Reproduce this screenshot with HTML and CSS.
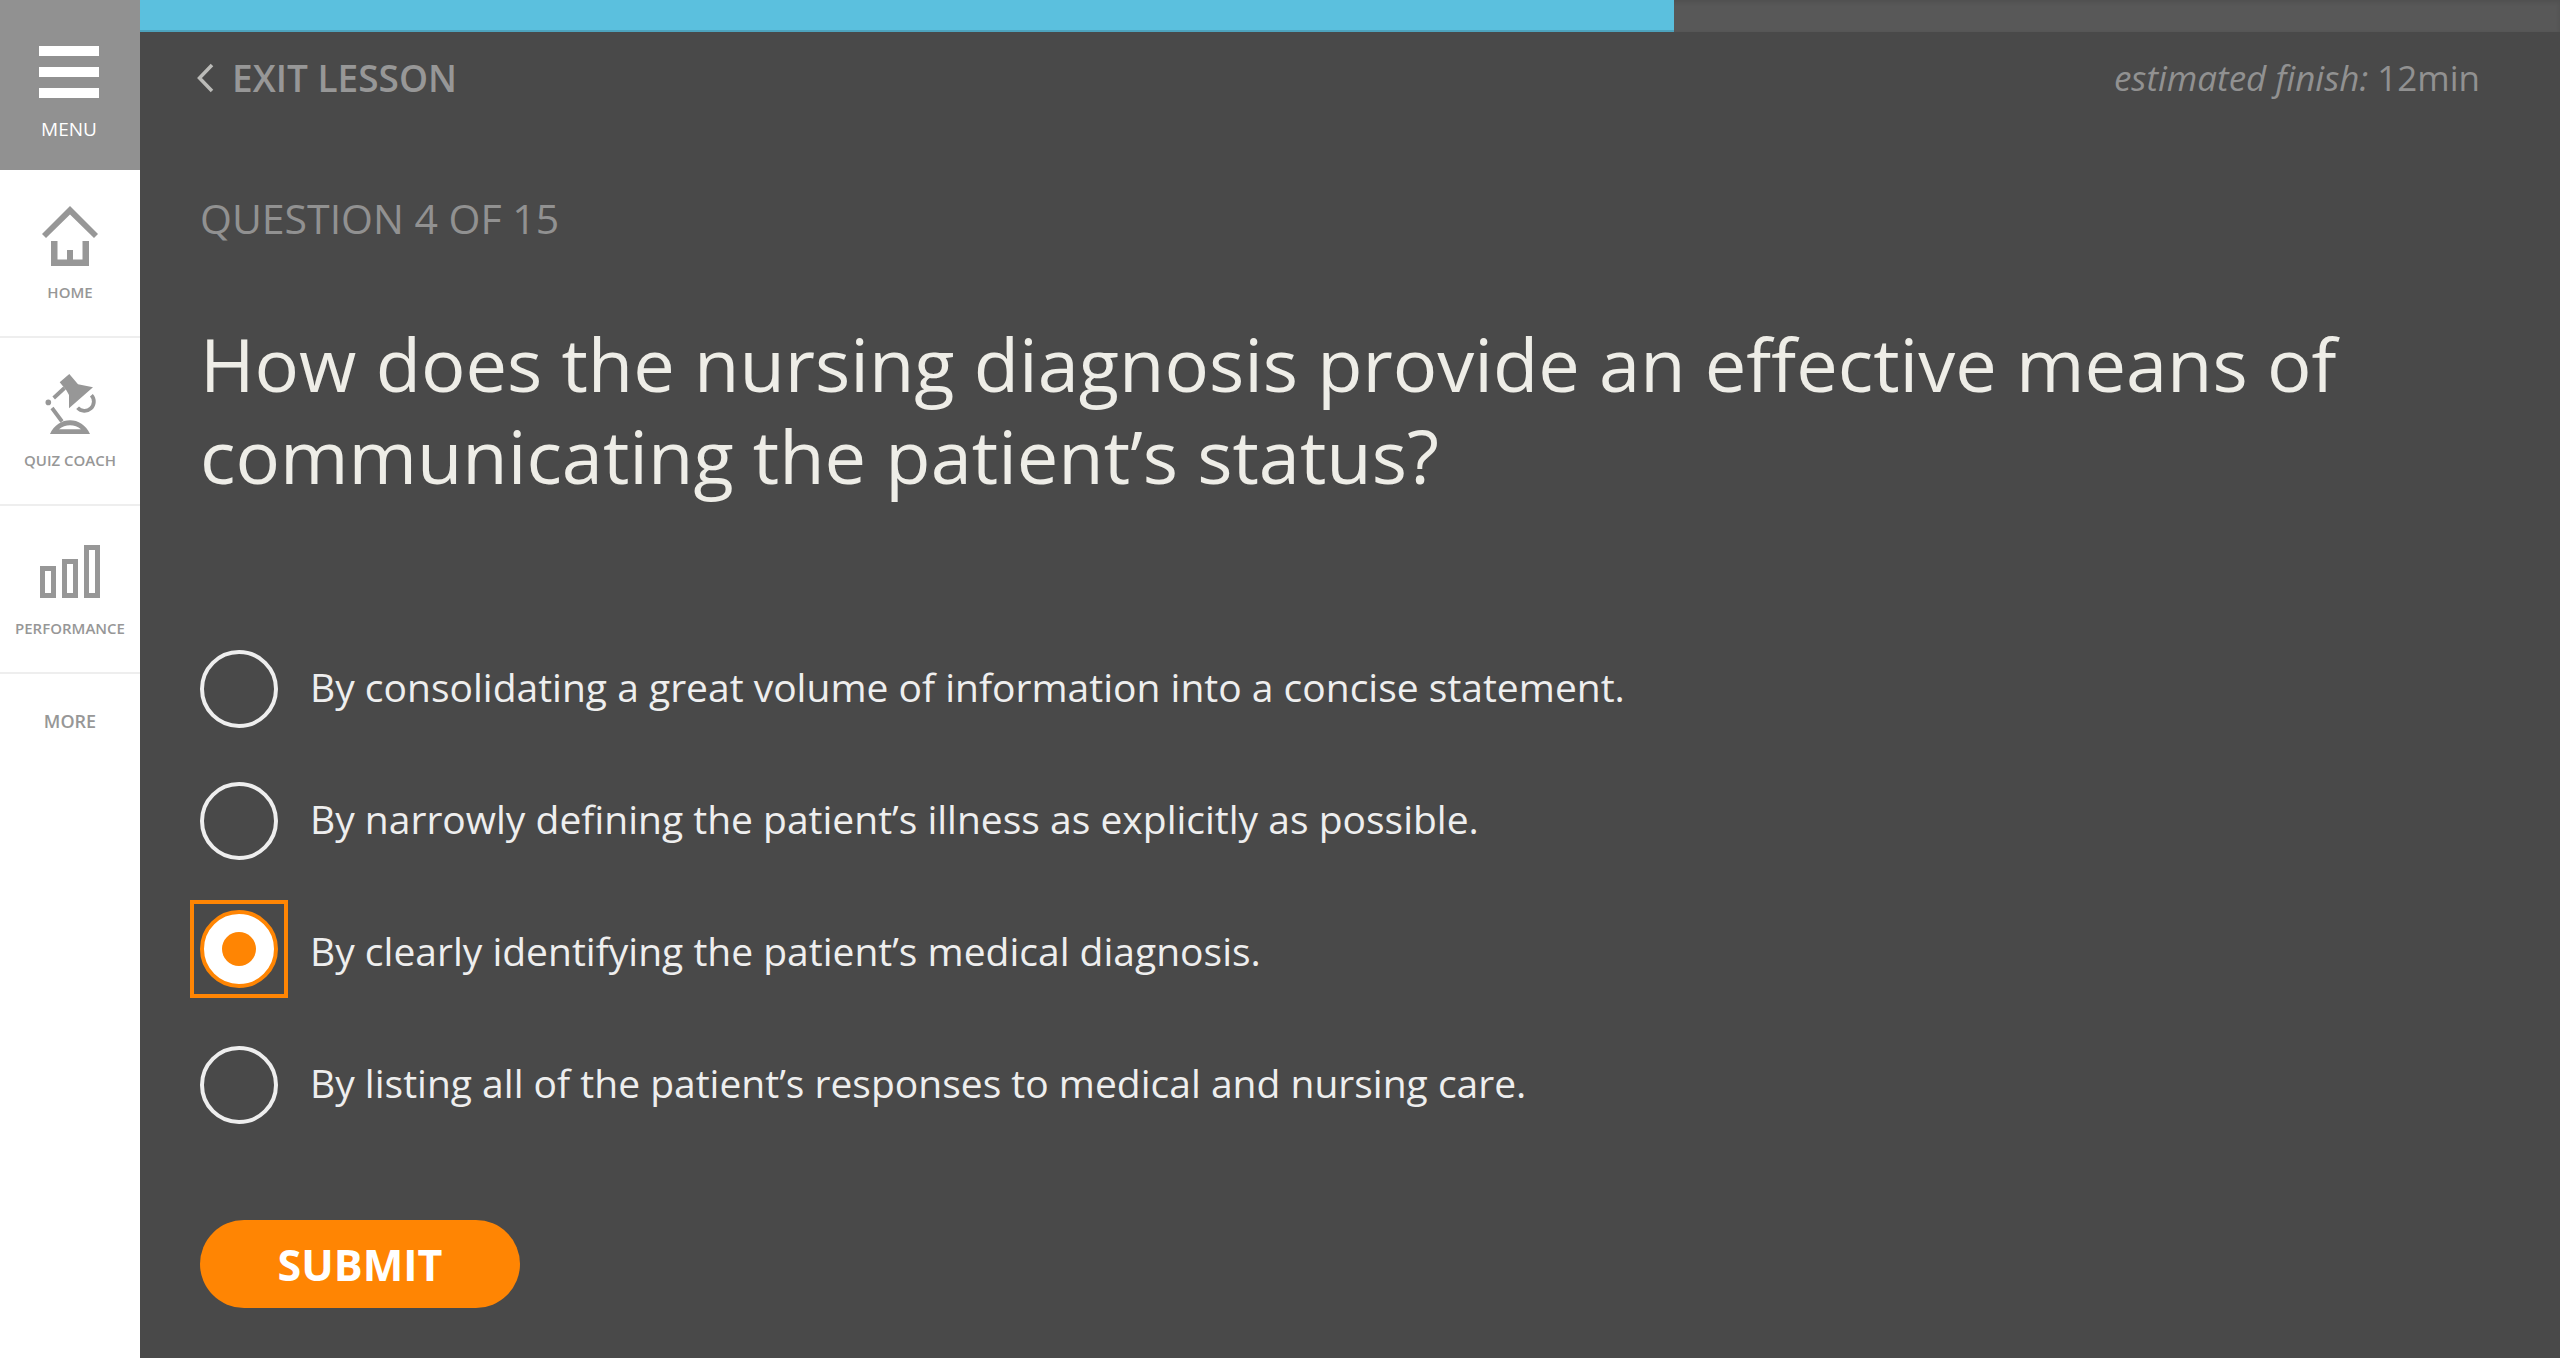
FILE: index.html
```html
<!DOCTYPE html>
<html lang="en">
<head>
<meta charset="utf-8">
<meta name="viewport" content="width=device-width, initial-scale=1">
<title>Question 4 of 15</title>
<link rel="stylesheet" href="styles.css">
</head>
<body>
<div class="app">
  <nav class="sidebar" aria-label="Main">
    <button type="button" class="menu-button">
      <svg width="60" height="52" viewBox="0 0 60 52" fill="currentColor" aria-hidden="true"><path d="M0 0h60v10H0zM0 21h60v10H0zM0 42h60v10H0z"/></svg>
      <span>MENU</span>
    </button>
    <a href="#home" class="nav-item">
      <svg width="64" height="60" viewBox="0 0 64 60" fill="currentColor" aria-hidden="true"><path d="M32 0 60 28 56 32 32 8.500 8 32 4 28zM13 35h6.500v18.500H29V44h6v9.500h9.500V35H51v25H13z"/></svg>
      <span>HOME</span>
    </a>
    <a href="#quiz-coach" class="nav-item">
      <svg width="64" height="60" viewBox="0 0 64 60" aria-hidden="true">
        <g fill="currentColor"><path d="M31.300 0 40 10.300 55 13.300 31 34.300V21L28.500 16.500 21.700 8.300z"/><circle cx="10.300" cy="28.400" r="2.800"/><path fill-rule="evenodd" d="M12 60C20 41.500 44 41.500 52 60zM21 55.200H43C37 49.800 27 49.800 21 55.200z"/></g>
        <g fill="none" stroke="currentColor" stroke-width="3.800"><path d="M26.500 14 15.700 24M14 34 24 47.500M39.600 33.800A9 9 0 0 0 53.400 21.200"/></g>
      </svg>
      <span>QUIZ COACH</span>
    </a>
    <a href="#performance" class="nav-item">
      <svg width="64" height="60" viewBox="0 0 64 60" fill="none" stroke="currentColor" stroke-width="5" aria-hidden="true"><path d="M4.500 26.500h11v27h-11zM26.500 19.500h11v34h-11zM48.500 5.500h11v48h-11z"/></svg>
      <span>PERFORMANCE</span>
    </a>
    <a href="#more" class="nav-item nav-more">MORE</a>
  </nav>

  <main class="lesson">
    <div class="progress" role="progressbar" aria-label="Lesson progress" aria-valuemin="0" aria-valuemax="100" aria-valuenow="63">
      <div class="progress-fill" style="width: 63.4%"></div>
    </div>
    <header class="lesson-header">
      <a href="#exit" class="exit">
        <svg width="18" height="30" viewBox="0 0 18 30" fill="none" stroke="currentColor" stroke-width="3.500" aria-hidden="true"><path d="M16 2 3.500 15 16 28"/></svg>
        <span>EXIT LESSON</span>
      </a>
      <p class="estimate"><em>estimated finish:</em> 12min</p>
    </header>

    <form class="question">
      <p class="counter">QUESTION 4 OF 15</p>
      <h1 id="prompt">How does the nursing diagnosis provide an effective means of communicating the patient’s status?</h1>
      <div class="options" role="radiogroup" aria-labelledby="prompt">
        <label class="option"><input type="radio" name="answer" value="1"><span>By consolidating a great volume of information into a concise statement.</span></label>
        <label class="option"><input type="radio" name="answer" value="2"><span>By narrowly defining the patient’s illness as explicitly as possible.</span></label>
        <label class="option"><input type="radio" name="answer" value="3" checked><span>By clearly identifying the patient’s medical diagnosis.</span></label>
        <label class="option"><input type="radio" name="answer" value="4"><span>By listing all of the patient’s responses to medical and nursing care.</span></label>
      </div>
      <button type="submit" class="submit">SUBMIT</button>
    </form>
  </main>
</div>
</body>
</html>
```
FILE: styles.css
```css
* {
  box-sizing: border-box;
}

body {
  margin: 0;
  background: #494949;
  color: #eeeeee;
  font-family: "Open Sans", "Noto Sans", sans-serif;
}

p,
h1 {
  margin: 0;
}

a {
  color: inherit;
  text-decoration: none;
}

button {
  border: 0;
  font-family: inherit;
  cursor: pointer;
}

.app {
  display: flex;
  min-height: 100vh;
}

/* Sidebar */
.sidebar {
  flex: 0 0 140px;
  display: flex;
  flex-direction: column;
  background: #ffffff;
  color: #979797;
}

.menu-button,
.nav-item {
  display: flex;
  flex-direction: column;
  align-items: center;
}

.menu-button {
  height: 170px;
  padding: 46px 2px 0 0;
  gap: 19px;
  background: #919191;
  color: #ffffff;
  font-size: 19px;
  line-height: 24px;
}

.nav-item {
  height: 168px;
  padding-top: 36px;
  gap: 16px;
  border-bottom: 2px solid #eeeeee;
  font-size: 15px;
  font-weight: 600;
  line-height: 20px;
}

.nav-more {
  height: auto;
  padding-top: 35px;
  border-bottom: 0;
  font-size: 18px;
  line-height: 24px;
}

/* Lesson */
.lesson {
  flex: 1;
  min-width: 0;
}

.progress {
  height: 32px;
  background: #585858;
  box-shadow: inset 0 2px 4px rgba(0, 0, 0, 0.1);
}

.progress-fill {
  height: 100%;
  background: #5bc0de;
  box-shadow: inset 0 -2px 0 rgba(0, 0, 0, 0.15);
}

.lesson-header {
  display: flex;
  justify-content: space-between;
  padding: 26px 80px 0 56px;
  color: #979797;
  line-height: 40px;
}

.exit {
  display: flex;
  align-items: center;
  gap: 18px;
  font-size: 37px;
  font-weight: 600;
}

.exit svg {
  color: #bbbbb8;
}

.estimate {
  color: #919191;
  font-size: 35px;
}

.question {
  padding: 96px 60px 48px;
}

.counter {
  color: #919191;
  font-size: 41px;
  line-height: 48px;
}

h1 {
  margin-top: 76px;
  color: #eeede7;
  font-size: 74px;
  font-weight: 400;
  line-height: 92px;
}

.options {
  display: flex;
  flex-direction: column;
  align-items: flex-start;
  gap: 54px;
  margin-top: 148px;
}

.option {
  display: flex;
  align-items: center;
  gap: 32px;
  min-height: 78px;
  font-size: 39px;
  line-height: 48px;
  cursor: pointer;
}

.option span {
  padding-bottom: 4px;
}

.option input {
  appearance: none;
  flex: none;
  display: grid;
  place-items: center;
  width: 78px;
  height: 78px;
  margin: 0;
  border: 4px solid #eeeeee;
  border-radius: 50%;
}

.option input:checked {
  position: relative;
  bottom: 4px;
  border-color: #ff8503;
  background: #ffffff;
}

.option input:checked::before {
  content: "";
  width: 34px;
  height: 34px;
  border-radius: 50%;
  background: #ff8503;
}

/* Square focus frame around the chosen answer */
.option input:checked::after {
  content: "";
  position: absolute;
  inset: -14px;
  border: 4px solid #ff8503;
}

.submit {
  display: block;
  width: 320px;
  height: 88px;
  margin-top: 96px;
  border-radius: 44px;
  background: #ff8503;
  color: #ffffff;
  font-size: 43px;
  font-weight: 700;
}
```
